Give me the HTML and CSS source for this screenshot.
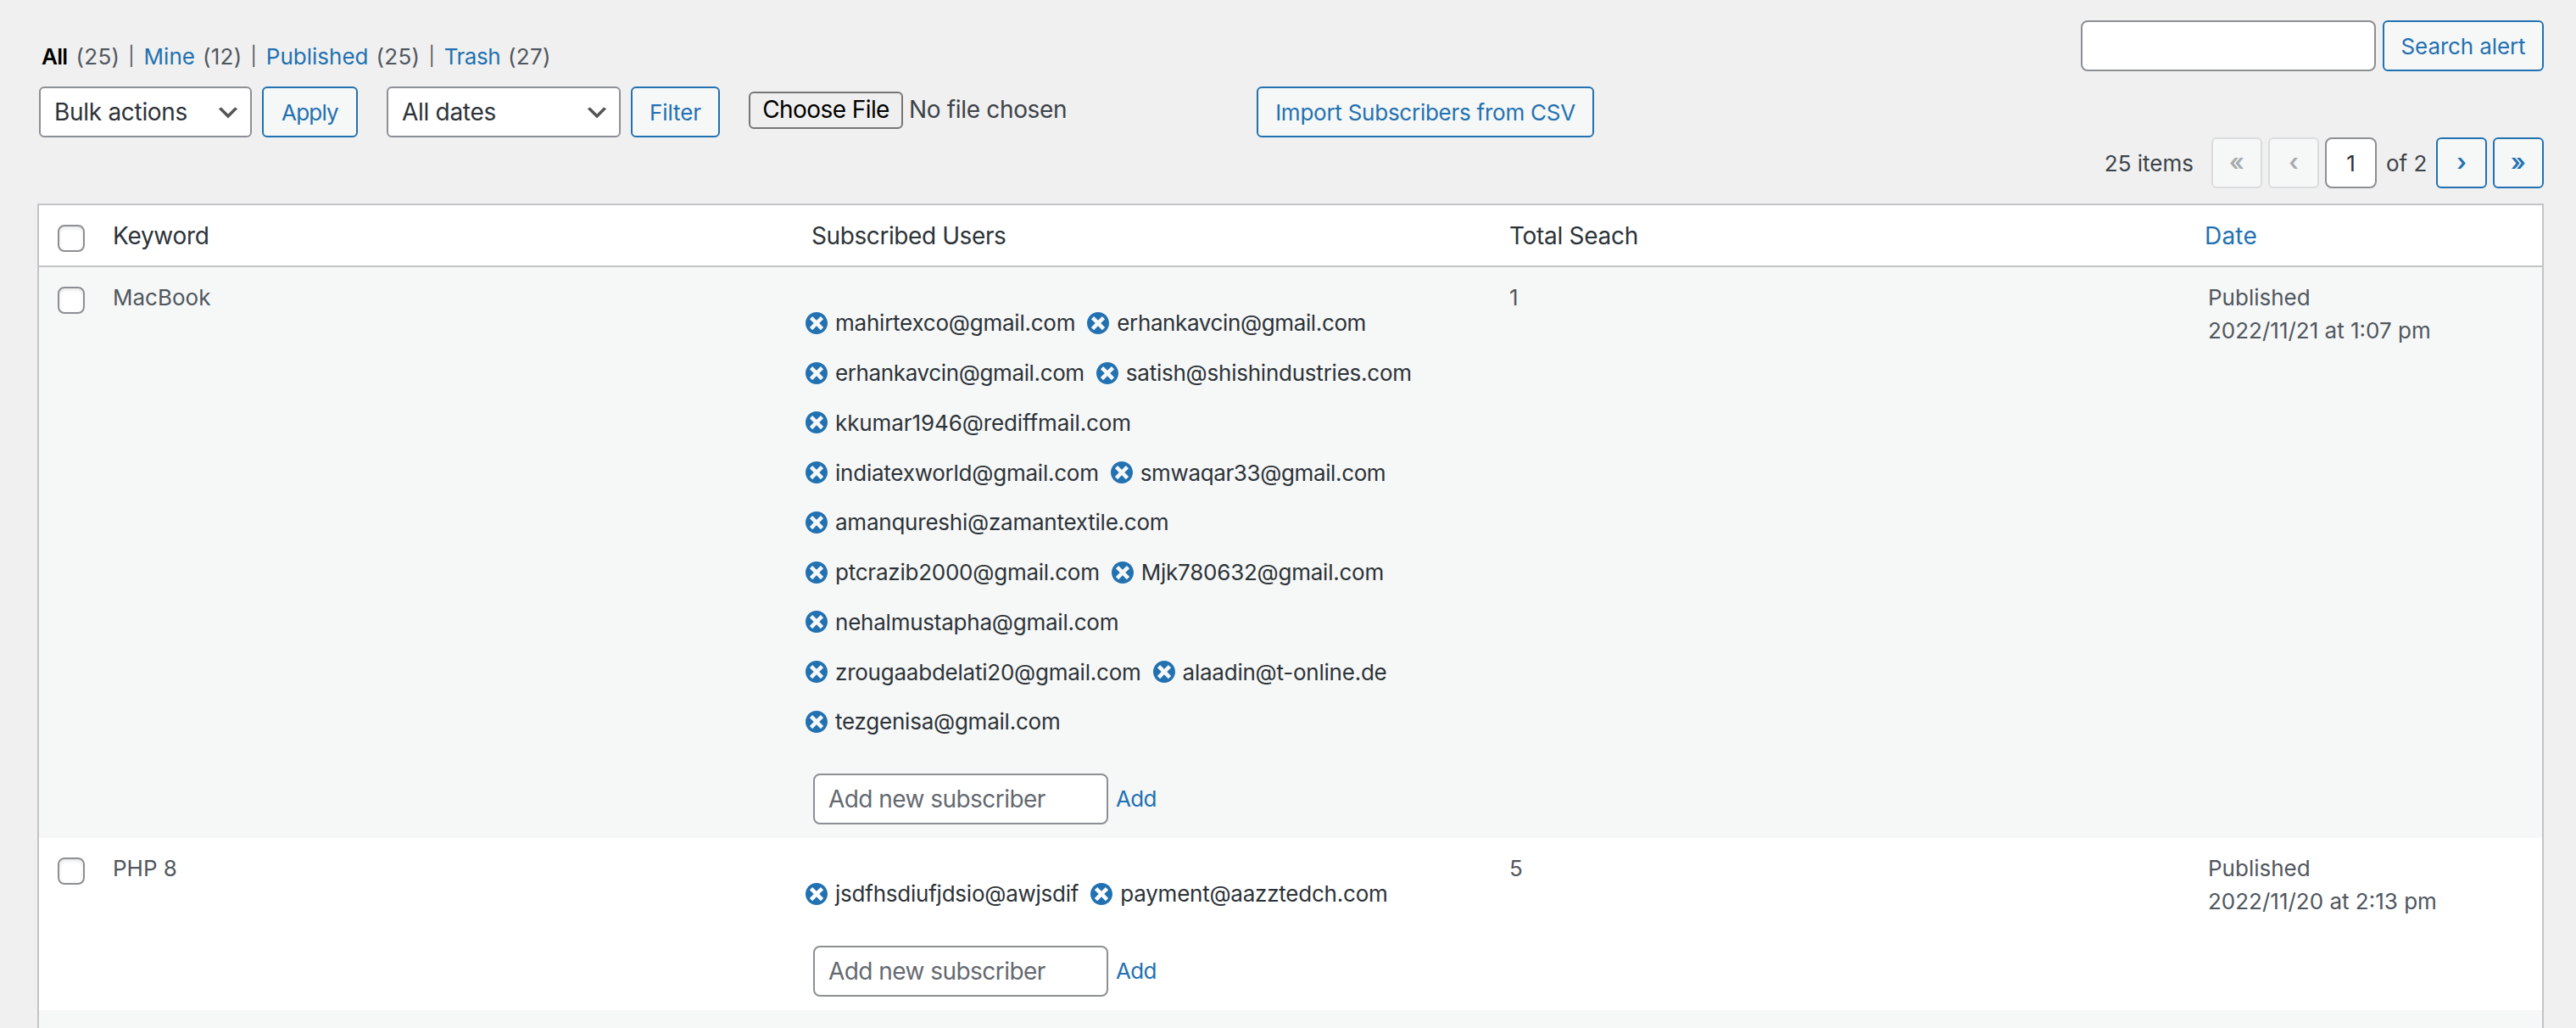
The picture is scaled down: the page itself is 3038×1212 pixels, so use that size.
FILE: index.html
```html
<!DOCTYPE html>
<html lang="en">
<head>
<meta charset="utf-8">
<title>Alerts</title>
<link rel="stylesheet" href="styles.css">
</head>
<body>
<svg class="sprite" aria-hidden="true">
  <symbol id="dismiss" viewBox="2 2 16 16"><path d="M10 2c4.42 0 8 3.58 8 8s-3.58 8-8 8-8-3.58-8-8 3.58-8 8-8zm5 11l-3-3 3-3-2-2-3 3-3-3-2 2 3 3-3 3 2 2 3-3 3 3 2-2z"/></symbol>
  <symbol id="chevron" viewBox="0 0 20 20"><path d="M5 6l5 5 5-5 2 1-7 7-7-7 2-1z"/></symbol>
</svg>
<main class="page">
  <header class="top">
    <ul class="views">
      <li><a class="current">All</a><span class="count">(25)</span></li>
      <li><a>Mine</a><span class="count">(12)</span></li>
      <li><a>Published</a><span class="count">(25)</span></li>
      <li><a class="snug">Trash</a><span class="count">(27)</span></li>
    </ul>
    <form class="search">
      <input class="field" type="text" aria-label="Search">
      <button class="button search-button" type="button">Search alert</button>
    </form>
  </header>

  <div class="toolbar">
    <div class="select bulk"><span>Bulk actions</span><svg><use href="#chevron"/></svg></div>
    <button class="button apply" type="button">Apply</button>
    <div class="select dates"><span>All dates</span><svg><use href="#chevron"/></svg></div>
    <button class="button filter" type="button">Filter</button>
    <div class="file"><button class="choose" type="button">Choose File</button><span>No file chosen</span></div>
    <button class="button import" type="button">Import Subscribers from CSV</button>
  </div>

  <nav class="pagination">
    <span class="total">25 items</span>
    <span class="page-button disabled">«</span>
    <span class="page-button disabled">‹</span>
    <span class="page-button number">1</span>
    <span class="of">of 2</span>
    <span class="page-button">›</span>
    <span class="page-button">»</span>
  </nav>

  <section class="table">
    <div class="row head">
      <div class="check"><span class="checkbox"></span></div>
      <div class="keyword">Keyword</div>
      <div class="users-title">Subscribed Users</div>
      <div>Total Seach</div>
      <div><a>Date</a></div>
    </div>

    <div class="row odd">
      <div class="check"><span class="checkbox"></span></div>
      <div class="keyword">MacBook</div>
      <div>
        <div class="subscribers">
          <div class="line"><span class="tag"><svg><use href="#dismiss"/></svg>mahirtexco@gmail.com</span><span class="tag tight"><svg><use href="#dismiss"/></svg>erhankavcin@gmail.com</span></div>
          <div class="line"><span class="tag tight"><svg><use href="#dismiss"/></svg>erhankavcin@gmail.com</span><span class="tag"><svg><use href="#dismiss"/></svg>satish@shishindustries.com</span></div>
          <div class="line"><span class="tag loose"><svg><use href="#dismiss"/></svg>kkumar1946@rediffmail.com</span></div>
          <div class="line"><span class="tag"><svg><use href="#dismiss"/></svg>indiatexworld@gmail.com</span><span class="tag tight"><svg><use href="#dismiss"/></svg>smwaqar33@gmail.com</span></div>
          <div class="line"><span class="tag"><svg><use href="#dismiss"/></svg>amanqureshi@zamantextile.com</span></div>
          <div class="line"><span class="tag"><svg><use href="#dismiss"/></svg>ptcrazib2000@gmail.com</span><span class="tag"><svg><use href="#dismiss"/></svg>Mjk780632@gmail.com</span></div>
          <div class="line"><span class="tag"><svg><use href="#dismiss"/></svg>nehalmustapha@gmail.com</span></div>
          <div class="line"><span class="tag"><svg><use href="#dismiss"/></svg>zrougaabdelati20@gmail.com</span><span class="tag"><svg><use href="#dismiss"/></svg>alaadin@t-online.de</span></div>
          <div class="line"><span class="tag"><svg><use href="#dismiss"/></svg>tezgenisa@gmail.com</span></div>
        </div>
        <div class="add"><input class="field" type="text" placeholder="Add new subscriber"><a>Add</a></div>
      </div>
      <div>1</div>
      <div class="date">Published<br>2022/11/21 at 1:07 pm</div>
    </div>

    <div class="row">
      <div class="check"><span class="checkbox"></span></div>
      <div class="keyword">PHP 8</div>
      <div>
        <div class="subscribers">
          <div class="line"><span class="tag"><svg><use href="#dismiss"/></svg>jsdfhsdiufjdsio@awjsdif</span><span class="tag"><svg><use href="#dismiss"/></svg>payment@aazztedch.com</span></div>
        </div>
        <div class="add"><input class="field" type="text" placeholder="Add new subscriber"><a>Add</a></div>
      </div>
      <div>5</div>
      <div class="date">Published<br>2022/11/20 at 2:13 pm</div>
    </div>

    <div class="row odd rest"></div>
  </section>
</main>
</body>
</html>
```
FILE: styles.css
```css
* { box-sizing: border-box; }

body {
  margin: 0;
  height: 1212px;
  overflow: hidden;
  background: #f0f0f0;
  color: #3c434a;
  font: 26px/39px Inter, "Noto Sans", sans-serif;
}

a { color: #2271b1; text-decoration: none; }
.sprite { display: none; }
button, input { font-family: inherit; margin: 0; }

.page {
  display: flex;
  flex-direction: column;
  height: 1212px;
  padding: 24px 38px 0 44px;
}

/* Views and search */
.top { display: flex; justify-content: space-between; height: 60px; }
.views {
  display: flex;
  margin: 23px 0 0 5px;
  padding: 0;
  list-style: none;
  color: #50575e;
}
.views li { display: flex; gap: 9px; }
.views li + li::before { content: "|"; margin: 0 2px 0 10px; font-size: 22px; }
.views .current { color: #000; font-weight: 600; letter-spacing: -.7px; margin-right: 1px; }
.views .snug { letter-spacing: -.5px; }
.count { letter-spacing: .3px; }
.search { display: flex; gap: 8px; }
.search .field { width: 348px; }

.field {
  height: 60px;
  padding: 0 16px;
  border: 2px solid #8c8f94;
  border-radius: 8px;
  background: #fff;
  color: #2c3338;
  font-size: 28px;
  outline: 0;
}
.field::placeholder { color: #646970; opacity: 1; letter-spacing: -.55px; }

.button {
  height: 60px;
  padding: 1px 0 0;
  border: 2px solid #2271b1;
  border-radius: 6px;
  background: #f6f7f7;
  color: #2271b1;
  font-size: 26px;
  line-height: 55px;
  white-space: nowrap;
  letter-spacing: -.12px;
}
.search-button { width: 190px; }

/* Bulk actions and filters */
.toolbar { display: flex; height: 60px; margin: 18px 0 0 2px; }
.select {
  display: flex;
  align-items: center;
  justify-content: space-between;
  height: 60px;
  padding: 0 10px 0 16px;
  border: 2px solid #8c8f94;
  border-radius: 6px;
  background: #fff;
  color: #2c3338;
  font-size: 28px;
  letter-spacing: -.3px;
}
.select svg { width: 32px; height: 32px; margin-top: 2px; fill: #555; }
.bulk { width: 251px; }
.apply { width: 113px; margin-left: 12px; letter-spacing: -.8px; }
.dates { width: 276px; margin-left: 34px; }
.filter { width: 105px; margin-left: 12px; }
.file {
  display: flex;
  gap: 7px;
  height: 44px;
  margin: 6px 0 0 34px;
  font-size: 28px;
  line-height: 42px;
  letter-spacing: -.33px;
}
.choose {
  width: 182px;
  height: 44px;
  padding: 0 0 2px;
  border: 2px solid #767676;
  border-radius: 6px;
  background: #efefef;
  color: #000;
  font-size: 28px;
  line-height: 38px;
  letter-spacing: -.57px;
}
.file span { width: 410px; }
.import { width: 398px; letter-spacing: -.25px; }

/* Pagination */
.pagination { display: flex; justify-content: flex-end; gap: 7px; height: 60px; line-height: 62px; }
.total { margin-right: 14px; }
.page-button {
  width: 60px;
  height: 60px;
  border: 2px solid #2271b1;
  border-radius: 6px;
  background: #f6f7f7;
  color: #2271b1;
  font-size: 28px;
  font-weight: 600;
  line-height: 54px;
  text-align: center;
}
.page-button.disabled { border-color: #dcdcde; color: #a7aaad; }
.page-button.number {
  width: 61px;
  border-color: #8c8f94;
  border-radius: 8px;
  background: #fff;
  color: #2c3338;
  font-size: 26px;
  font-weight: 400;
  line-height: 58px;
}
.of { width: 56px; padding-left: 4px; white-space: nowrap; }

/* Alerts table */
.table {
  display: flex;
  flex-direction: column;
  flex: 1;
  margin-top: 18px;
  border: 2px solid #c3c4c7;
  border-bottom: 0;
  background: #fff;
}
.row {
  display: grid;
  grid-template-columns: 86px 824px 824px 820px 1fr;
  padding: 16px 0;
  color: #50575e;
}
.row.odd { background: #f6f7f7; }
.row.rest { flex: 1; padding: 0; }
.row.head {
  height: 73px;
  border-bottom: 2px solid #c3c4c7;
  color: #2c3338;
  font-size: 28px;
  line-height: 41px;
  letter-spacing: -.3px;
}
.keyword { padding-left: 1px; }
.users-title { padding-left: 1px; letter-spacing: -.41px; }
.head a { letter-spacing: .2px; }
.check { padding: 7px 0 0 22px; height: 39px; }
.checkbox {
  display: block;
  width: 32px;
  height: 32px;
  border: 2px solid #8c8f94;
  border-radius: 8px;
  background: #fff;
  box-shadow: inset 0 2px 4px rgba(0, 0, 0, .1);
}
.date { padding-left: 4px; }

.subscribers { margin: 20.6px 0 0 -6px; color: #2c3338; }
.line { display: flex; align-items: center; gap: 14px; height: 58.75px; }
.tag { display: flex; align-items: center; letter-spacing: -.23px; }
.tag.tight { letter-spacing: -.37px; }
.tag.loose { letter-spacing: -.1px; }
.tag svg { width: 26px; height: 26px; margin-right: 9px; fill: #2271b1; }
.add { display: flex; align-items: center; gap: 9px; margin: 31.6px 0 0 3px; }
.add .field { width: 348px; }
.add a { letter-spacing: -.7px; }
```
